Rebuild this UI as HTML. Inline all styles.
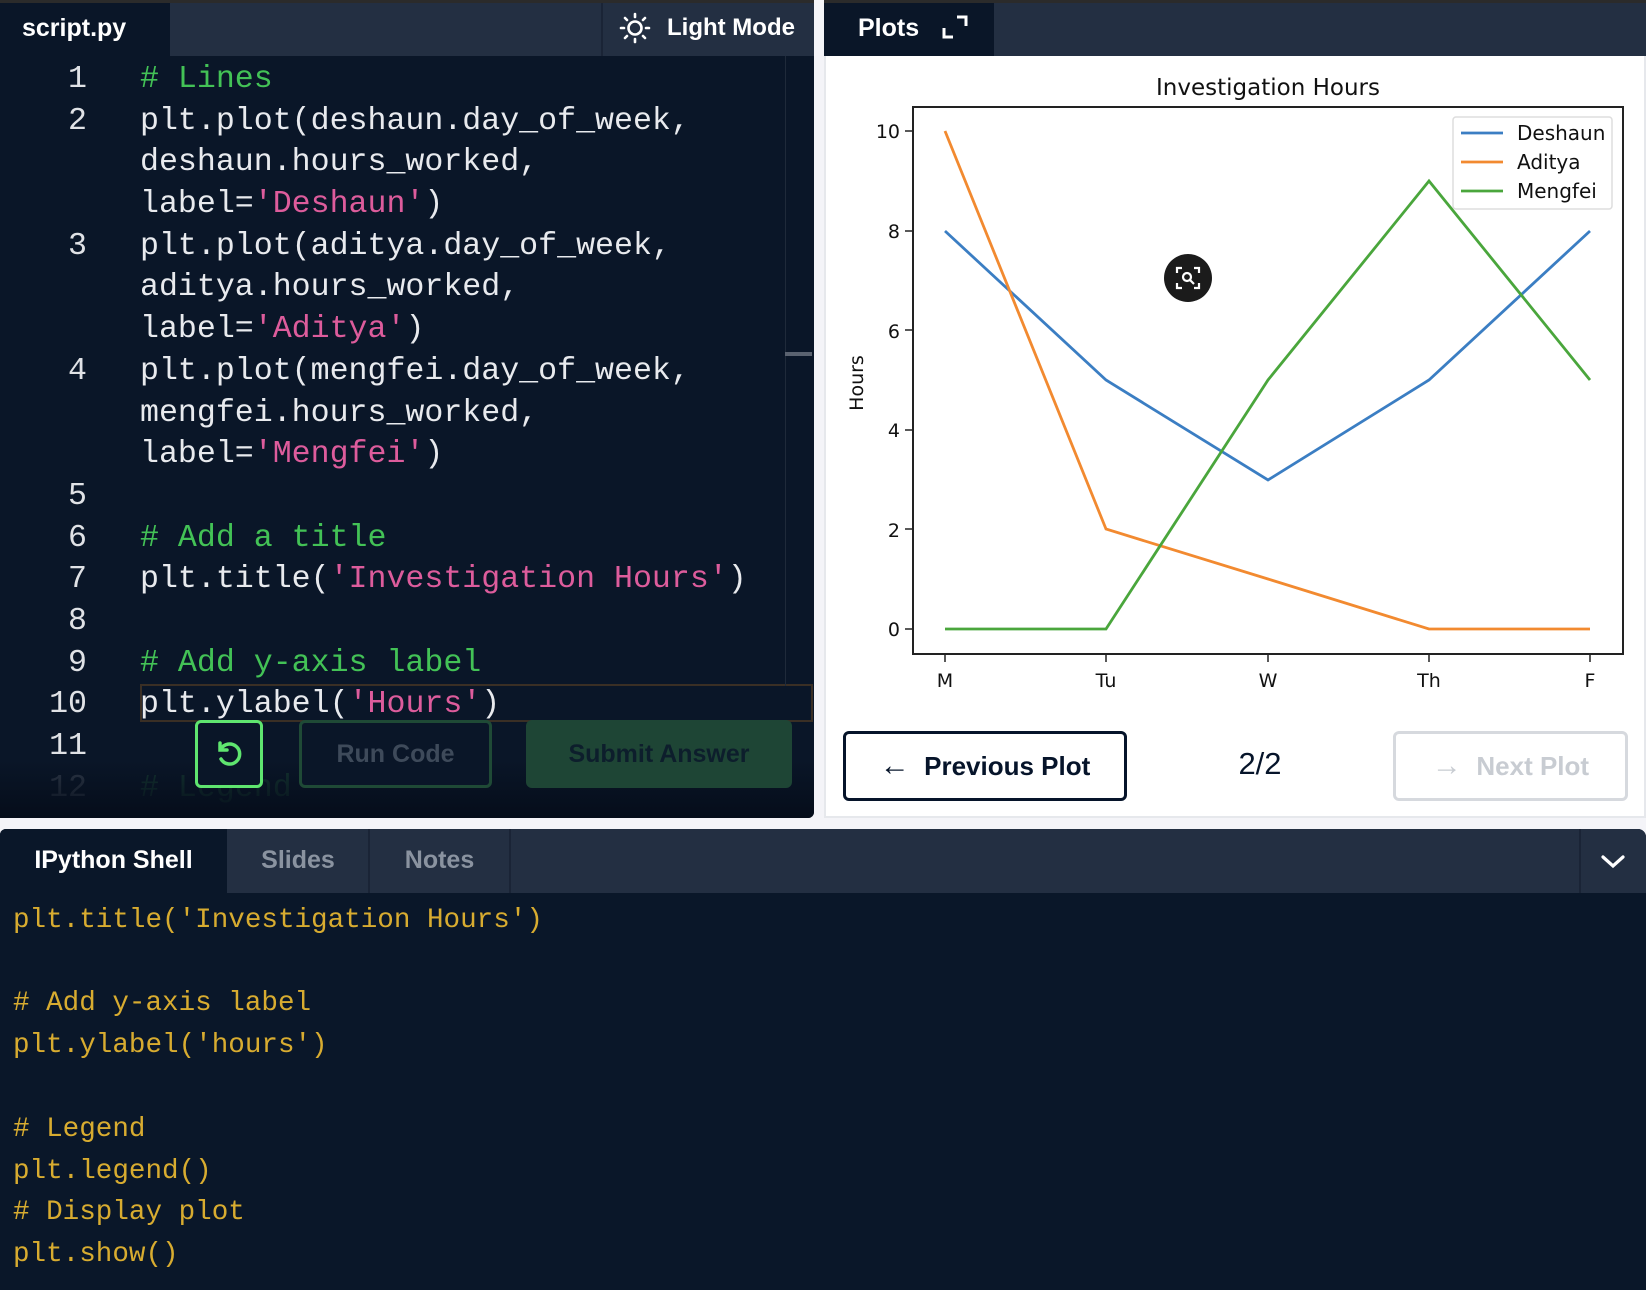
<!DOCTYPE html>
<html><head><meta charset="utf-8"><style>
*{margin:0;padding:0;box-sizing:border-box}
body{width:1646px;height:1290px;background:#f4f4f8;position:relative;overflow:hidden;font-family:"Liberation Sans",sans-serif}
.abs{position:absolute}
.mono{font-family:"Liberation Mono",monospace}
#ed{left:0;top:0;width:814px;height:818px;background:#0a1628;overflow:hidden;border-radius:0 0 6px 0}
#edbar{left:0;top:0;width:814px;height:56px;background:#232f42;border-top:3px solid #2b2b2b}
.tab{position:absolute;top:0;height:53px;color:#fff;font-weight:bold;font-size:25px;line-height:50px}
.code{left:0;top:59px;width:814px;font-size:31.6px;line-height:41.7px;color:#e8eaee}
.ln{position:absolute;left:0;width:87px;text-align:right;color:#e0e2e6}
.c{color:#43c256}.s{color:#dd5c9c}
.row{position:relative;height:41.7px;white-space:pre}
.row .t{position:absolute;left:140px}
.btn{position:absolute;border-radius:6px;font-weight:bold;font-size:25px;text-align:center}
#pl{left:824px;top:0;width:822px;height:818px;background:#fff;border:2px solid #e6e8ec;border-top:none}
#sh{left:0;top:829px;width:1646px;height:461px;background:#0a1729;border-radius:6px 8px 0 0;overflow:hidden}
.stab{position:absolute;top:0;height:64px;line-height:62px;font-weight:bold;font-size:25px;text-align:center}
.sl{position:absolute;left:13px;font-size:27.6px;color:#d8ac30;white-space:pre}
</style></head><body>
<div id="ed" class="abs">
 <div id="edbar" class="abs">
  <div class="tab" style="left:0;width:170px;background:#0a1628;padding-left:22px">script.py</div>
  <div class="abs" style="left:601px;top:0;width:2px;height:53px;background:#1a2436"></div>
  <svg class="abs" style="left:618px;top:8px" width="34" height="34" viewBox="0 0 34 34" fill="none" stroke="#fff" stroke-width="2.6" stroke-linecap="round"><circle cx="17" cy="17" r="6.5"/><path d="M17 3v3M17 28v3M3 17h3M28 17h3M7 7l2 2M25 25l2 2M7 27l2-2M25 9l2-2"/></svg>
  <div class="tab" style="left:667px;font-size:24px">Light Mode</div>
 </div>
 <div class="abs mono code"><div class="row"><span class="ln">1</span><span class="t c"># Lines</span></div><div class="row"><span class="ln">2</span><span class="t">plt.plot(deshaun.day_of_week,</span></div><div class="row"><span class="t">deshaun.hours_worked,</span></div><div class="row"><span class="t">label=<span class="s">'Deshaun'</span>)</span></div><div class="row"><span class="ln">3</span><span class="t">plt.plot(aditya.day_of_week,</span></div><div class="row"><span class="t">aditya.hours_worked,</span></div><div class="row"><span class="t">label=<span class="s">'Aditya'</span>)</span></div><div class="row"><span class="ln">4</span><span class="t">plt.plot(mengfei.day_of_week,</span></div><div class="row"><span class="t">mengfei.hours_worked,</span></div><div class="row"><span class="t">label=<span class="s">'Mengfei'</span>)</span></div><div class="row"><span class="ln">5</span></div><div class="row"><span class="ln">6</span><span class="t c"># Add a title</span></div><div class="row"><span class="ln">7</span><span class="t">plt.title(<span class="s">'Investigation Hours'</span>)</span></div><div class="row"><span class="ln">8</span></div><div class="row"><span class="ln">9</span><span class="t c"># Add y-axis label</span></div><div class="row"><span class="ln">10</span><span class="t">plt.ylabel(<span class="s">'Hours'</span>)</span></div><div class="row"><span class="ln">11</span></div><div class="row" style="opacity:.35"><span class="ln">12</span><span class="t c"># Legend</span></div></div>
 <div class="abs" style="left:140px;top:684px;width:673px;height:38px;border:2px solid #3a2f25"></div>
 <div class="abs" style="left:785px;top:56px;width:1px;height:630px;background:#1f2a3a"></div>
 <div class="abs" style="left:785px;top:352px;width:27px;height:4px;background:#5a6270"></div>
 <div class="abs" style="left:0;top:760px;width:814px;height:58px;background:linear-gradient(rgba(10,22,40,0.5),#050d1a)"></div>
 <div class="btn" style="left:195px;top:720px;width:68px;height:68px;border:3px solid #5fe56f;background:#0a1628">
  <svg width="62" height="62" viewBox="0 0 62 62" fill="none" stroke="#5fe56f" stroke-width="3.5" stroke-linecap="round"><path d="M23 26a10 10 0 1 1 0 10"/><path d="M22 20v7h7"/></svg></div>
 <div class="btn" style="left:299px;top:720px;width:193px;height:68px;border:3px solid #1f4a36;color:#3e4a5a;line-height:62px;background:#0a1628">Run Code</div>
 <div class="btn" style="left:526px;top:720px;width:266px;height:68px;background:#1e4535;color:#0d1e2c;line-height:68px">Submit Answer</div>
</div>

<div id="pl" class="abs">
 <div class="abs" style="left:-2px;top:0;width:822px;height:56px;background:#232f42;border-top:3px solid #2b2b2b"></div>
 <div class="abs" style="left:-2px;top:3px;width:170px;height:53px;background:#0a1628"></div>
 <div class="tab" style="left:32px;top:3px">Plots</div>
 <svg class="abs" style="left:114px;top:12px" width="30" height="30" viewBox="0 0 30 30" fill="none" stroke="#fff" stroke-width="3"><path d="M4 16v9h9M17 5h9v9"/></svg>
</div>

<svg class="abs" style="left:0;top:0" width="1646" height="1290" viewBox="0 0 1646 1290" font-family="DejaVu Sans, sans-serif">
 <text x="1268" y="95" font-size="23" text-anchor="middle" fill="#111">Investigation Hours</text>
 <rect x="913" y="107" width="710" height="547" fill="none" stroke="#222" stroke-width="2"/>
 <g font-size="19" fill="#111" text-anchor="end">
  <text x="900" y="138">10</text><text x="900" y="238">8</text><text x="900" y="338">6</text><text x="900" y="437">4</text><text x="900" y="537">2</text><text x="900" y="636">0</text>
 </g>
 <g stroke="#222" stroke-width="1.5"><path d="M905 131h8M905 231h8M905 330h8M905 430h8M905 529h8M905 629h8M945 654v8M1106 654v8M1268 654v8M1429 654v8M1590 654v8"/></g>
 <g font-size="19" fill="#111" text-anchor="middle">
  <text x="945" y="687">M</text><text x="1106" y="687">Tu</text><text x="1268" y="687">W</text><text x="1429" y="687">Th</text><text x="1590" y="687">F</text>
 </g>
 <text transform="translate(863,383) rotate(-90)" font-size="19" text-anchor="middle" fill="#111">Hours</text>
 <g fill="none" stroke-width="2.8">
  <polyline stroke="#3b7ec3" points="945,231 1106,380 1268,480 1429,380 1590,231"/>
  <polyline stroke="#f28a30" points="945,131 1106,529 1268,579 1429,629 1590,629"/>
  <polyline stroke="#4aa63c" points="945,629 1106,629 1268,380 1429,181 1590,380"/>
 </g>
 <rect x="1453" y="117" width="159" height="92" rx="3" fill="#fff" stroke="#ddd" stroke-width="1.5"/>
 <g stroke-width="2.8"><path d="M1461 133h42" stroke="#3b7ec3"/><path d="M1461 162h42" stroke="#f28a30"/><path d="M1461 191h42" stroke="#4aa63c"/></g>
 <g font-size="20" fill="#111"><text x="1517" y="140">Deshaun</text><text x="1517" y="169">Aditya</text><text x="1517" y="198">Mengfei</text></g>
 <circle cx="1188" cy="278" r="24" fill="#1b1b1b"/>
 <g fill="none" stroke="#fff" stroke-width="2.2"><path d="M1177 273v-5h5M1194 268h5v5M1199 283v5h-5M1182 288h-5v-5"/><circle cx="1187" cy="277" r="4"/><path d="M1190 280l4 4"/></g>
</svg>

<div class="btn" style="left:843px;top:731px;width:284px;height:70px;border:3px solid #06142a;color:#06142a;line-height:64px;background:#fff;font-size:26px"><span style="font-size:30px;font-weight:normal">&#8592;</span>&nbsp; Previous Plot</div>
<div class="abs" style="left:1220px;top:746px;width:80px;text-align:center;font-size:31px;color:#06142a">2/2</div>
<div class="btn" style="left:1393px;top:731px;width:235px;height:70px;border:3px solid #d6d9de;color:#c8ccd2;line-height:64px;background:#fff;font-size:26px"><span style="font-size:30px;font-weight:normal">&#8594;</span>&nbsp; Next Plot</div>

<div id="sh" class="abs">
 <div class="abs" style="left:0;top:0;width:1646px;height:64px;background:#232f42"></div>
 <div class="stab" style="left:0;width:227px;background:#0a1729;color:#fff">IPython Shell</div>
 <div class="stab" style="left:228px;width:142px;color:#8a93a0;border-right:2px solid #1a2436">Slides</div>
 <div class="stab" style="left:370px;width:141px;color:#8a93a0;border-right:2px solid #1a2436">Notes</div>
 <div class="abs" style="left:1579px;top:0;width:2px;height:64px;background:#1a2436"></div>
 <svg class="abs" style="left:1598px;top:18px" width="30" height="30" viewBox="0 0 30 30" fill="none" stroke="#fff" stroke-width="3.2" stroke-linecap="round"><path d="M5 10l10 9 10-9"/></svg>
 <div class="sl mono" style="top:76px">plt.title('Investigation Hours')</div>
 <div class="sl mono" style="top:159px"># Add y-axis label</div>
 <div class="sl mono" style="top:201px">plt.ylabel('hours')</div>
 <div class="sl mono" style="top:285px"># Legend</div>
 <div class="sl mono" style="top:327px">plt.legend()</div>
 <div class="sl mono" style="top:368px"># Display plot</div>
 <div class="sl mono" style="top:410px">plt.show()</div>
</div>
</body></html>
